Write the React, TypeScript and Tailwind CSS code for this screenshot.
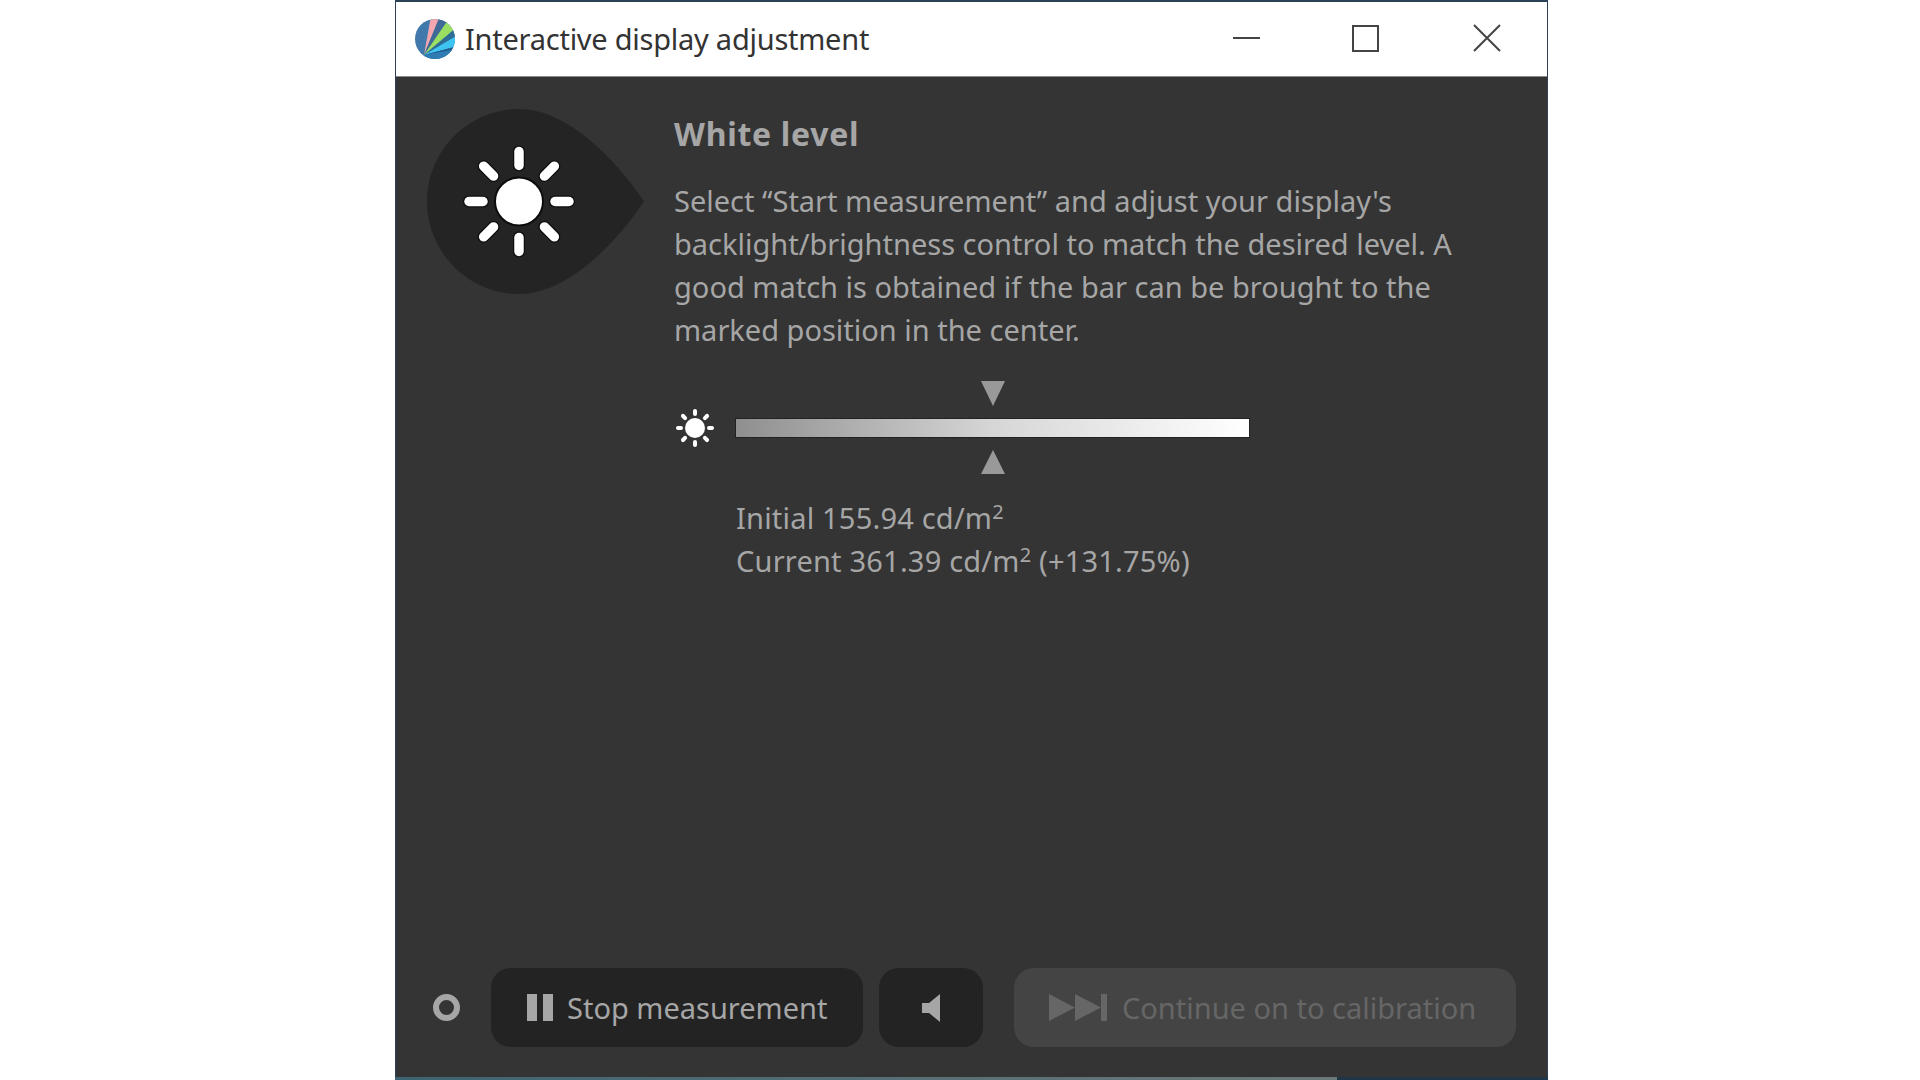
const Logo = () => (
  <svg width="42" height="42" viewBox="0 0 42 42" className="shrink-0">
    <defs>
      <clipPath id="lc"><circle cx="21" cy="21" r="20" /></clipPath>
    </defs>
    <g clipPath="url(#lc)">
      <rect width="42" height="42" fill="#4279ad" />
      <polygon points="10,37 17,-2 26,-2" fill="#f4a6ae" />
      <polygon points="10,37 26,-2 34,2" fill="#3f6a96" />
      <polygon points="10,37 34,2 42,10" fill="#9bdf62" />
      <polygon points="10,37 42,10 44,17" fill="#2e6d96" />
      <polygon points="10,37 44,17 44,28" fill="#3fc4f2" />
      <polygon points="10,37 44,28 44,33" fill="#1f5f8f" />
      <polygon points="10,37 44,31 44,46 7,46" fill="#2f7cb4" />
    </g>
  </svg>
);

const Sun = ({ size, r, a, b, w }: { size: number; r: number; a: number; b: number; w: number }) => {
  const c = size / 2;
  const angles = [0, 45, 90, 135, 180, 225, 270, 315];
  return (
    <svg width={size} height={size} viewBox={`0 0 ${size} ${size}`}>
      {angles.map((d) => {
        const t = (d * Math.PI) / 180;
        return (
          <line
            key={d}
            x1={c + a * Math.cos(t)}
            y1={c + a * Math.sin(t)}
            x2={c + b * Math.cos(t)}
            y2={c + b * Math.sin(t)}
            stroke="#ffffff"
            strokeWidth={w}
            strokeLinecap="round"
          />
        );
      })}
      <circle cx={c} cy={c} r={r} fill="#ffffff" />
    </svg>
  );
};

export default function App() {
  return (
    <div className="h-[1080px] w-[1920px] overflow-hidden bg-white" style={{ fontFamily: '"Noto Sans", sans-serif' }}>
      <div className="ml-[395px] flex h-[1077px] w-[1153px] flex-col border-x border-t-2 border-[#2b4256] bg-[#343434]">
        <div className="flex h-[75px] shrink-0 items-center border-b border-[#8a8a8a] bg-white pl-[18px]">
          <Logo />
          <span className="ml-[9px] text-[29px] tracking-[-0.25px] text-[#333333]">Interactive display adjustment</span>
          <div className="ml-auto flex items-center">
            <svg width="27" height="4" viewBox="0 0 27 4" className="mr-[92px] mb-[2px]"><rect y="1" width="27" height="2" fill="#444444" /></svg>
            <svg width="27" height="27" viewBox="0 0 27 27" className="mr-[94px] mb-[2px]"><rect x="1" y="1" width="25" height="25" fill="none" stroke="#444444" strokeWidth="2" /></svg>
            <svg width="28" height="28" viewBox="0 0 28 28" className="mr-[46px] mb-[2px]"><path d="M1 1L27 27M27 1L1 27" stroke="#444444" strokeWidth="2" fill="none" /></svg>
          </div>
        </div>
        <div className="flex flex-1 pl-[31px] pt-[32px]">
          <svg width="217" height="185" viewBox="0 0 217 185" className="shrink-0 self-start">
            <path d="M92 0C139 0 187 48 217 92.5C187 137 139 185 92 185C41 185 0 143 0 92.5C0 42 41 0 92 0Z" fill="#242424" />
            <g transform="translate(92 92.5)">
              {[0, 45, 90, 135, 180, 225, 270, 315].map((d) => (
                <g key={d} transform={`rotate(${d})`}>
                  <line x1="36" y1="0" x2="50" y2="0" stroke="#0c0c0c" strokeWidth="12" strokeLinecap="round" />
                  <line x1="36" y1="0" x2="50" y2="0" stroke="#ffffff" strokeWidth="9.5" strokeLinecap="round" />
                </g>
              ))}
              <circle r="24" fill="#ffffff" stroke="#0c0c0c" strokeWidth="2" />
            </g>
          </svg>
          <div className="ml-[30px] flex flex-col text-[29px] leading-[43px] text-[#a6a6a6]">
            <div className="mt-[3px] text-[32px] font-bold tracking-[0.7px]">White level</div>
            <div className="mt-[24px] w-[800px]">
              <p>Select “Start measurement” and adjust your display's</p>
              <p>backlight/brightness control to match the desired level. A</p>
              <p>good match is obtained if the bar can be brought to the</p>
              <p>marked position in the center.</p>
            </div>
            <div className="mt-[30px] flex items-center">
              <div className="ml-[2px] flex w-[60px] shrink-0"><Sun size={38} r={10} a={14} b={17} w={4} /></div>
              <div className="flex w-[513px] flex-col items-center">
                <svg width="24" height="25" viewBox="0 0 24 25"><polygon points="0,0 24,0 12,25" fill="#999999" /></svg>
                <div className="my-[13px] h-[18px] w-full bg-gradient-to-r from-[#8f8f8f] via-[#d6d6d6] to-white shadow-[0_0_0_1px_#222222]" />
                <svg width="24" height="24" viewBox="0 0 24 24"><polygon points="12,0 24,24 0,24" fill="#999999" /></svg>
              </div>
            </div>
            <div className="ml-[62px] mt-[22px] tracking-[0.2px]">
              <p>Initial 155.94 cd/m<sup className="text-[20px] leading-none">2</sup></p>
              <p>Current 361.39 cd/m<sup className="text-[20px] leading-none">2</sup> (+131.75%)</p>
            </div>
          </div>
        </div>
        <div className="flex h-[109px] shrink-0 items-start pl-[37px] text-[29px]">
          <div className="mt-[26px] h-[27px] w-[27px] rounded-full border-[6px] border-[#a6a6a6]" />
          <div className="ml-[31px] flex h-[79px] w-[372px] items-center rounded-[20px] bg-[#232323] pl-[36px] text-[#a6a6a6]">
            <svg width="27" height="27" viewBox="0 0 27 27"><path d="M0 0H10V27H0ZM16 0H26V27H16Z" fill="#a6a6a6" /></svg>
            <span className="ml-[13px]">Stop measurement</span>
          </div>
          <div className="ml-[16px] flex h-[79px] w-[104px] items-center justify-center rounded-[20px] bg-[#232323]">
            <svg width="18" height="28" viewBox="0 0 18 28"><path d="M18 0V28L7 19H0V9H7Z" fill="#a6a6a6" /></svg>
          </div>
          <div className="ml-[31px] flex h-[79px] w-[502px] items-center rounded-[20px] bg-[#444444] pl-[35px] text-[#666666]">
            <svg width="58" height="27" viewBox="0 0 58 27"><path d="M0 0L26 13.5L0 27ZM26 0L52 13.5L26 27ZM52 0H58V27H52Z" fill="#666666" /></svg>
            <span className="ml-[15px]">Continue on to calibration</span>
          </div>
        </div>
      </div>
      <div className="ml-[395px] flex h-[3px] w-[1153px] bg-[#1f3648]">
        <div className="h-full w-[942px] bg-gradient-to-r from-[#3d6472] to-[#6b7878]" />
      </div>
    </div>
  );
}
